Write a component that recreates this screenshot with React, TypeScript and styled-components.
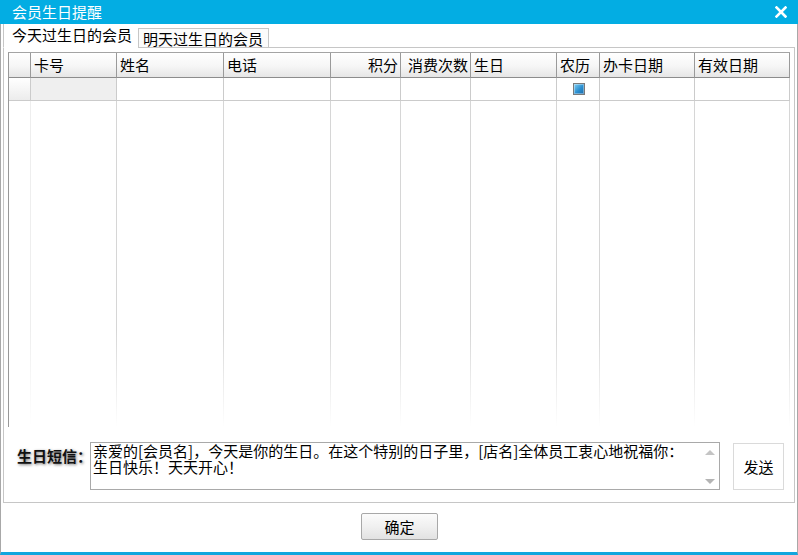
import React from "react";
import styled, { createGlobalStyle } from "styled-components";

const GlobalStyle = createGlobalStyle`
  html, body { margin: 0; padding: 0; background: #ffffff; }
  body { font-family: "Noto Sans CJK SC", "Liberation Sans", sans-serif; }
  * { box-sizing: border-box; }
`;

const Window = styled.div`
  width: 798px;
  height: 555px;
  display: flex;
  flex-direction: column;
  background: #ffffff;
  overflow: hidden;
`;

const TitleBar = styled.div`
  height: 24px;
  flex: none;
  background: #03ade3;
  display: flex;
  align-items: center;
  justify-content: space-between;
  padding: 0 10px 0 12px;
  color: #ffffff;
  font-size: 15px;
  line-height: 24px;
`;

const CloseButton = styled.div`
  width: 14px;
  height: 14px;
  display: flex;
  align-items: center;
  justify-content: center;
`;

const Body = styled.div`
  flex: 1;
  display: flex;
  flex-direction: column;
  border-left: 1px solid #a8a8a8;
  border-right: 1px solid #a8a8a8;
  border-bottom: 3px solid #12a6de;
`;

const TabStrip = styled.div`
  height: 23px;
  flex: none;
  display: flex;
  align-items: flex-end;
  padding-left: 2px;
`;

const Tab = styled.div<{ $active?: boolean }>`
  position: relative;
  height: ${(p) => (p.$active ? "24px" : "20px")};
  margin-bottom: -1px;
  padding: ${(p) => (p.$active ? "0 0 0 8px" : "0 0 0 4px")};
  width: ${(p) => (p.$active ? "135px" : "131px")};
  border: 1px solid #c6c6c6;
  border-top: ${(p) => (p.$active ? "none" : "1px solid #c6c6c6")};
  border-right: ${(p) => (p.$active ? "none" : "1px solid #c6c6c6")};
  border-bottom: 1px solid ${(p) => (p.$active ? "#ffffff" : "#c6c6c6")};
  background: ${(p) => (p.$active ? "#ffffff" : "#fbfbfb")};
  z-index: ${(p) => (p.$active ? 1 : 0)};
  font-size: 15px;
  line-height: ${(p) => (p.$active ? "22px" : "19px")};
  color: #000000;
  white-space: nowrap;
`;

const Panel = styled.div`
  height: 456px;
  flex: none;
  margin: 0 2px;
  border: 1px solid #c6c6c6;
  padding: 4px 4px 12px 4px;
  display: flex;
  flex-direction: column;
`;

const cols = "22px 86px 107px 107px 70px 70px 86px 43px 95px 95px";

const Grid = styled.div`
  height: 375px;
  flex: none;
  border-left: 1px solid #999999;
  border-top: 1px solid #a4a4a4;
  display: flex;
  flex-direction: column;
`;

const Row = styled.div<{ $height: number }>`
  display: grid;
  grid-template-columns: ${cols};
  height: ${(p) => p.$height}px;
  flex: none;
`;

const HeaderCell = styled.div<{ $align?: string }>`
  border-right: 1px solid #9a9a9a;
  border-bottom: 1px solid #8c8c8c;
  background: linear-gradient(to bottom, #ffffff 0%, #f6f6f6 55%, #e6e6e6 100%);
  font-size: 15px;
  line-height: 23px;
  padding: 0 2px 0 3px;
  text-align: ${(p) => p.$align || "left"};
  white-space: nowrap;
  overflow: hidden;
`;

const Cell = styled.div<{ $selected?: boolean; $selector?: boolean }>`
  border-right: 1px solid #cbcbcb;
  border-bottom: 1px solid #cbcbcb;
  background: ${(p) =>
    p.$selector
      ? "linear-gradient(to bottom, #ffffff, #ececec)"
      : p.$selected
      ? "#efefef"
      : "#ffffff"};
  display: flex;
  align-items: center;
  justify-content: center;
`;

const Filler = styled.div`
  flex: 1;
  display: grid;
  grid-template-columns: ${cols};
  -webkit-mask-image: linear-gradient(to bottom, #000 70%, transparent 100%);
  mask-image: linear-gradient(to bottom, #000 70%, transparent 100%);
`;

const FillerCol = styled.div<{ $faint?: boolean }>`
  border-right: 1px solid ${(p) => (p.$faint ? "#eeeeee" : "#d6d6d6")};
`;

const CheckBox = styled.div`
  width: 12px;
  height: 12px;
  margin-left: 1px;
  border: 1px solid #7a7a7a;
  background: linear-gradient(135deg, #7fd0f5 0%, #2b8fd0 55%, #1c6aa8 100%);
  box-shadow: inset 0 0 0 1px rgba(255, 255, 255, 0.35);
`;

const MessageRow = styled.div`
  margin-top: 15px;
  height: 48px;
  display: flex;
  align-items: flex-start;
  padding-left: 9px;
`;

const MessageLabel = styled.div`
  width: 73px;
  padding-top: 6px;
  font-size: 15px;
  line-height: 16px;
  font-weight: bold;
  color: #111111;
  text-shadow: 1px 1px 3px rgba(0, 0, 0, 0.55);
  white-space: nowrap;
`;

const MessageBox = styled.div`
  width: 630px;
  height: 48px;
  border: 1px solid #a9a9a9;
  display: flex;
  background: #ffffff;
`;

const MessageText = styled.div`
  flex: 1;
  padding: 0 0 0 2px;
  font-size: 15px;
  line-height: 16px;
  color: #000000;
  overflow: hidden;
`;

const MessageLine = styled.div`
  white-space: nowrap;
`;

const ScrollBar = styled.div`
  width: 18px;
  display: flex;
  flex-direction: column;
  justify-content: space-between;
  align-items: center;
  padding: 7px 0 5px 0;
`;

const Arrow = styled.div<{ $down?: boolean }>`
  width: 0;
  height: 0;
  border-left: 5px solid transparent;
  border-right: 5px solid transparent;
  ${(p) =>
    p.$down
      ? "border-top: 5px solid #b4b4b4;"
      : "border-bottom: 5px solid #c4c4c4;"}
`;

const SendButton = styled.div`
  margin-left: 13px;
  margin-top: 1px;
  width: 51px;
  height: 47px;
  border: 1px solid #dadada;
  background: #ffffff;
  display: flex;
  align-items: center;
  justify-content: center;
  font-size: 15px;
  color: #000000;
`;

const Footer = styled.div`
  flex: 1;
  display: flex;
  justify-content: center;
  padding-top: 10px;
`;

const OkButton = styled.div`
  width: 77px;
  height: 27px;
  margin-left: 1px;
  border: 1px solid #a8a8a8;
  border-radius: 2px;
  background: linear-gradient(to bottom, #fbfbfb 0%, #f0f0f0 50%, #e2e2e2 100%);
  display: flex;
  align-items: center;
  justify-content: center;
  font-size: 15px;
  color: #000000;
`;

const columns = [
  { title: "", align: "left" },
  { title: "卡号", align: "left" },
  { title: "姓名", align: "left" },
  { title: "电话", align: "left" },
  { title: "积分", align: "right" },
  { title: "消费次数", align: "right" },
  { title: "生日", align: "left" },
  { title: "农历", align: "left" },
  { title: "办卡日期", align: "left" },
  { title: "有效日期", align: "left" },
];

export default function App() {
  return (
    <>
      <GlobalStyle />
      <Window>
        <TitleBar>
          <span>会员生日提醒</span>
          <CloseButton>
            <svg width="12" height="12" viewBox="0 0 12 12">
              <path d="M1.5 1.5 L10.5 10.5 M10.5 1.5 L1.5 10.5" stroke="#ffffff" strokeWidth="2.6" strokeLinecap="square" />
            </svg>
          </CloseButton>
        </TitleBar>
        <Body>
          <TabStrip>
            <Tab $active>今天过生日的会员</Tab>
            <Tab>明天过生日的会员</Tab>
          </TabStrip>
          <Panel>
            <Grid>
              <Row $height={25}>
                {columns.map((c, i) => (
                  <HeaderCell key={i} $align={c.align}>{c.title}</HeaderCell>
                ))}
              </Row>
              <Row $height={23}>
                {columns.map((c, i) => (
                  <Cell key={i} $selector={i === 0} $selected={i === 1}>
                    {c.title === "农历" && <CheckBox />}
                  </Cell>
                ))}
              </Row>
              <Filler>
                {columns.map((c, i) => (
                  <FillerCol key={i} $faint={i === 0} />
                ))}
              </Filler>
            </Grid>
            <MessageRow>
              <MessageLabel>生日短信：</MessageLabel>
              <MessageBox>
                <MessageText>
                  <MessageLine>亲爱的[会员名]，今天是你的生日。在这个特别的日子里，[店名]全体员工衷心地祝福你：</MessageLine>
                  <MessageLine>生日快乐！天天开心！</MessageLine>
                </MessageText>
                <ScrollBar>
                  <Arrow />
                  <Arrow $down />
                </ScrollBar>
              </MessageBox>
              <SendButton>发送</SendButton>
            </MessageRow>
          </Panel>
          <Footer>
            <OkButton>确定</OkButton>
          </Footer>
        </Body>
      </Window>
    </>
  );
}
